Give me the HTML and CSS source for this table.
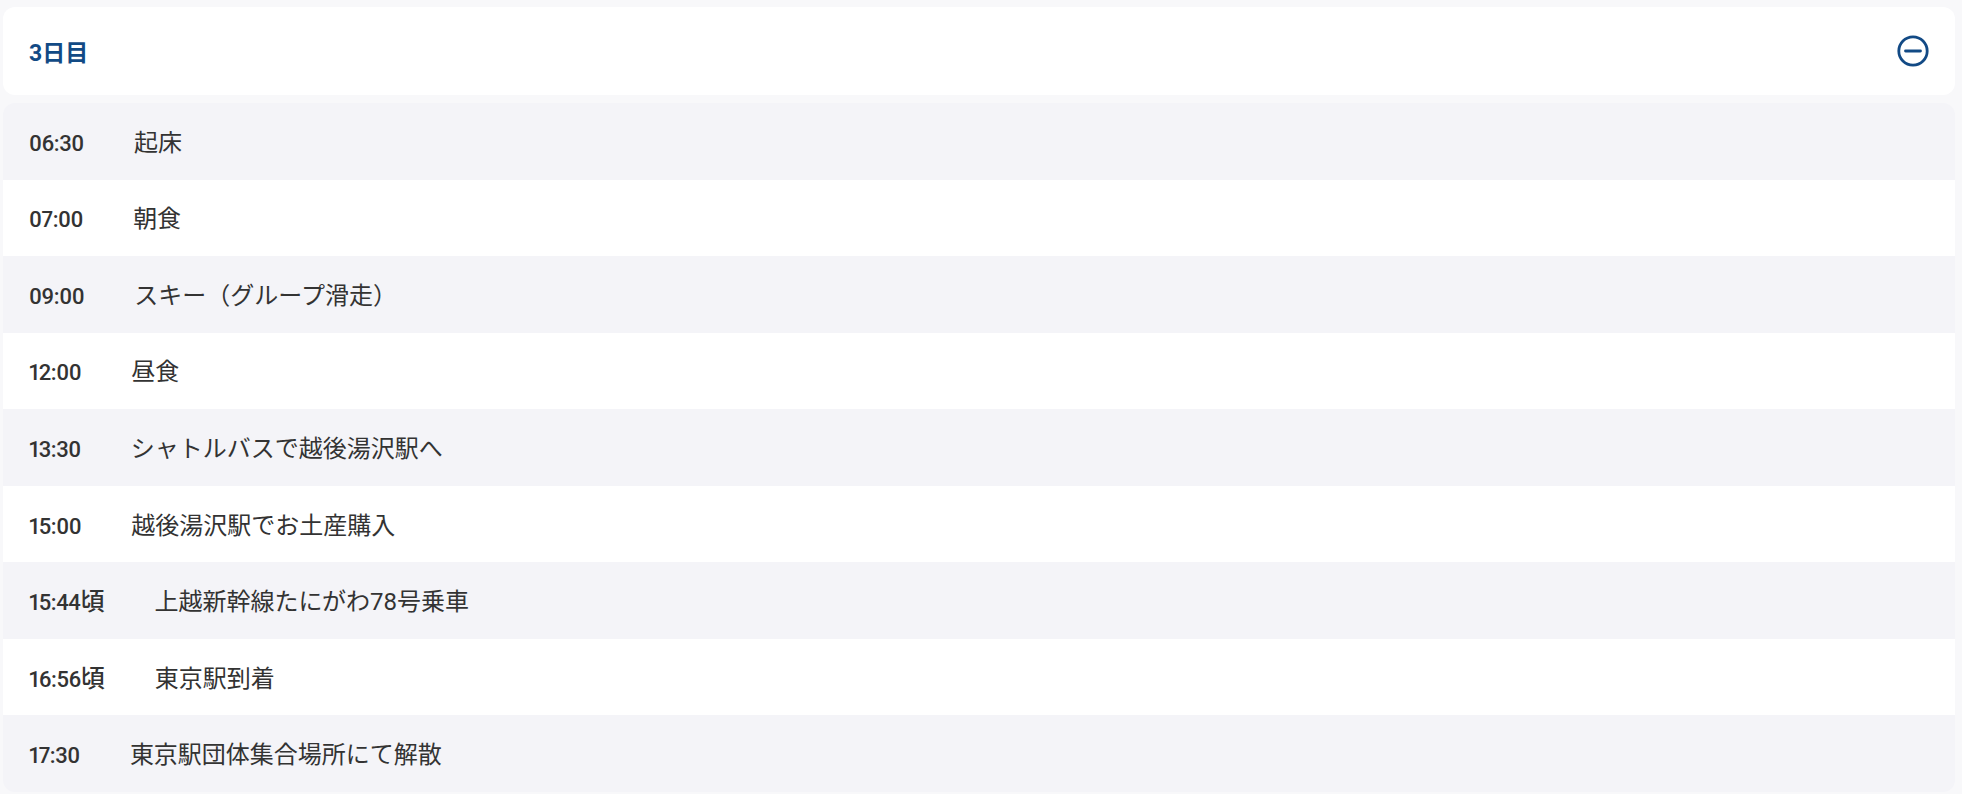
FILE: index.html
```html
<!DOCTYPE html>
<html lang="ja">
<head>
<meta charset="utf-8">
<title>3日目</title>
<link rel="stylesheet" href="styles.css">
</head>
<body>
<div class="page">
  <div class="day-header">
    <span class="day-title">3日目</span>
    <button class="toggle" aria-label="閉じる">
      <svg width="32" height="32" viewBox="0 0 32 32" fill="none" stroke="#124a85" stroke-width="2.8" stroke-linecap="round">
        <circle cx="16" cy="16" r="14.2"/>
        <line x1="8.5" y1="16" x2="23.5" y2="16"/>
      </svg>
    </button>
  </div>
  <ul class="schedule">
    <li class="row"><div class="entry"><span class="time">06:30</span><span class="desc">起床</span></div></li>
    <li class="row"><div class="entry"><span class="time">07:00</span><span class="desc">朝食</span></div></li>
    <li class="row"><div class="entry"><span class="time">09:00</span><span class="desc">スキー（グループ滑走）</span></div></li>
    <li class="row"><div class="entry"><span class="time">12:00</span><span class="desc">昼食</span></div></li>
    <li class="row"><div class="entry"><span class="time">13:30</span><span class="desc">シャトルバスで越後湯沢駅へ</span></div></li>
    <li class="row"><div class="entry"><span class="time">15:00</span><span class="desc">越後湯沢駅でお土産購入</span></div></li>
    <li class="row"><div class="entry"><span class="time">15:44<span class="approx">頃</span></span><span class="desc">上越新幹線たにがわ78号乗車</span></div></li>
    <li class="row"><div class="entry"><span class="time">16:56<span class="approx">頃</span></span><span class="desc">東京駅到着</span></div></li>
    <li class="row"><div class="entry"><span class="time">17:30</span><span class="desc">東京駅団体集合場所にて解散</span></div></li>
  </ul>
</div>
</body>
</html>
```

FILE: styles.css
```css
html, body {
  margin: 0;
  padding: 0;
  background: #f8f8fa;
}
body {
  font-family: Roboto, "Noto Sans CJK JP", sans-serif;
  color: #333333;
}
.page {
  padding: 7px 7px 0 3px;
  display: flex;
  flex-direction: column;
  gap: 8px;
}
.day-header {
  height: 88px;
  background: #ffffff;
  border-radius: 12px;
  display: flex;
  align-items: center;
  justify-content: space-between;
  padding: 0 26px;
  box-sizing: border-box;
}
.day-title {
  font-size: 23px;
  font-weight: 700;
  color: #124a85;
}
.toggle {
  border: 0;
  background: none;
  padding: 0;
  margin: 0;
  width: 32px;
  height: 32px;
  display: flex;
}
.schedule {
  list-style: none;
  margin: 0;
  padding: 0;
  border-radius: 12px;
  overflow: hidden;
}
.row {
  height: 76.56px;
  box-sizing: border-box;
  display: flex;
  align-items: center;
  padding: 0 26px 2px;
  background: #ffffff;
}
.row:nth-child(odd) {
  background: #f4f4f8;
}
.entry {
  display: flex;
  align-items: baseline;
  gap: 50px;
}
.time {
  font-size: 22px;
  font-weight: 500;
  letter-spacing: -0.4px;
  color: #333333;
  font-variant-numeric: proportional-nums;
}
.approx {
  font-size: 24px;
  letter-spacing: 0;
}
.desc {
  font-size: 24px;
  font-weight: 400;
  color: #333333;
}
```
